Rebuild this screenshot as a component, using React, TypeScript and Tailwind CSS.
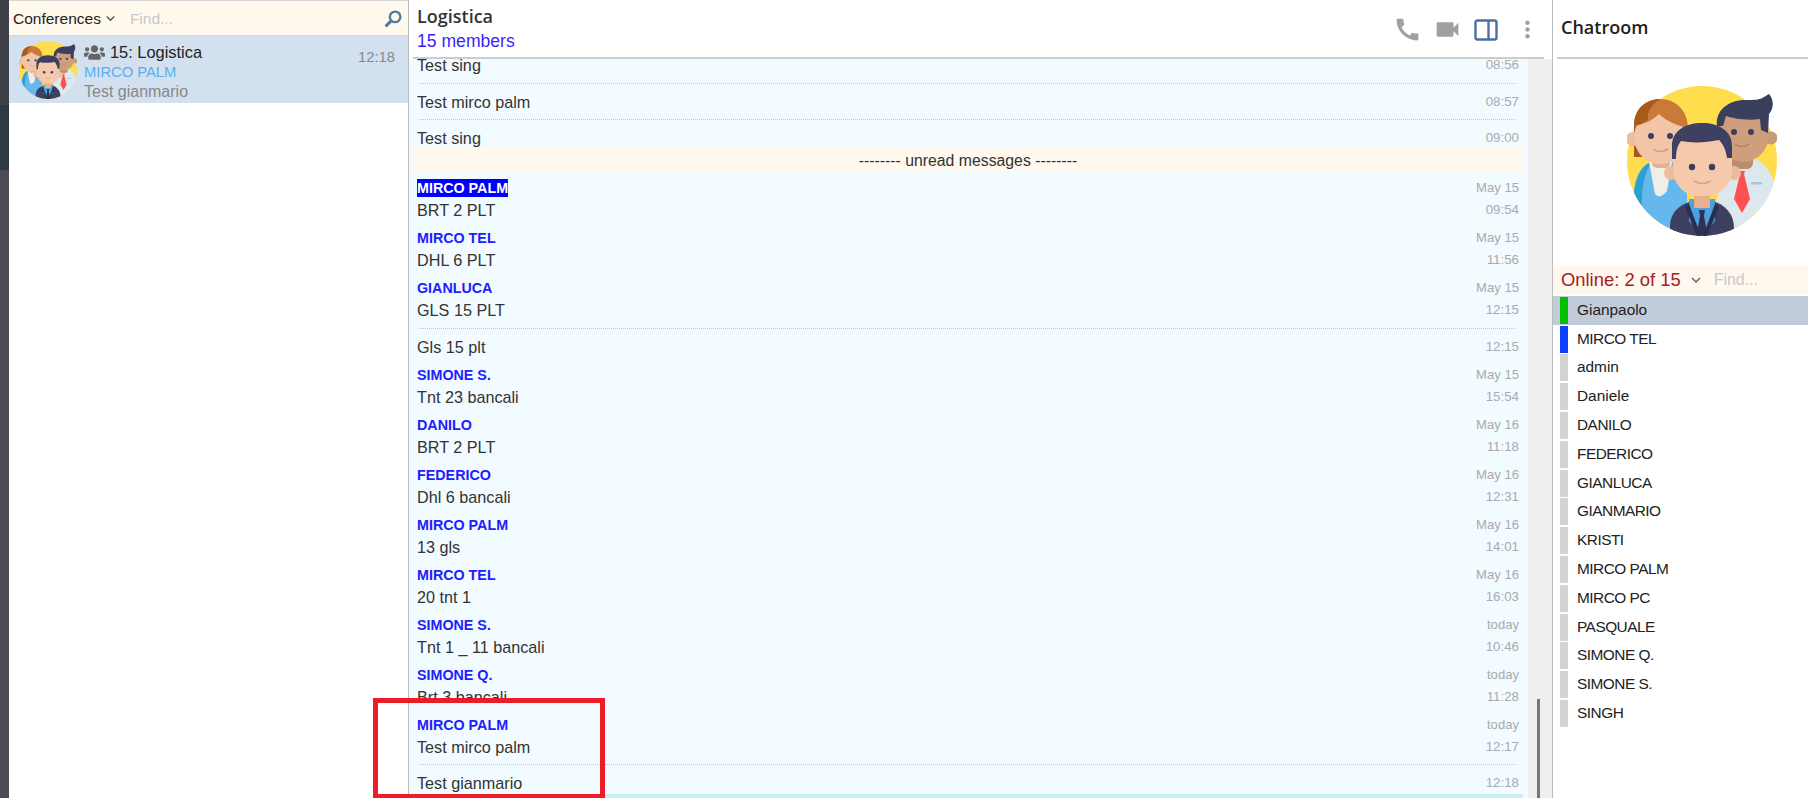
import { FaUsers } from 'react-icons/fa'
import { MdCall, MdKeyboardArrowDown, MdMoreVert, MdVideocam } from 'react-icons/md'

type Msg = {
  name?: string
  date?: string
  text: string
  time: string
  sep?: boolean
  tight?: boolean
  highlight?: boolean
}

const topMessages: Msg[] = [
  { text: 'Test sing', time: '08:56' },
  { text: 'Test mirco palm', time: '08:57', sep: true },
  { text: 'Test sing', time: '09:00', sep: true, tight: true },
]

const messages: Msg[] = [
  { name: 'MIRCO PALM', date: 'May 15', text: 'BRT 2 PLT', time: '09:54', highlight: true },
  { name: 'MIRCO TEL', date: 'May 15', text: 'DHL 6 PLT', time: '11:56' },
  { name: 'GIANLUCA', date: 'May 15', text: 'GLS 15 PLT', time: '12:15' },
  { text: 'Gls 15 plt', time: '12:15', sep: true },
  { name: 'SIMONE S.', date: 'May 15', text: 'Tnt 23 bancali', time: '15:54' },
  { name: 'DANILO', date: 'May 16', text: 'BRT 2 PLT', time: '11:18' },
  { name: 'FEDERICO', date: 'May 16', text: 'Dhl 6 bancali', time: '12:31' },
  { name: 'MIRCO PALM', date: 'May 16', text: '13 gls', time: '14:01' },
  { name: 'MIRCO TEL', date: 'May 16', text: '20 tnt 1', time: '16:03' },
  { name: 'SIMONE S.', date: 'today', text: 'Tnt 1 _ 11 bancali', time: '10:46' },
  { name: 'SIMONE Q.', date: 'today', text: 'Brt 3 bancali', time: '11:28' },
  { name: 'MIRCO PALM', date: 'today', text: 'Test mirco palm', time: '12:17' },
  { text: 'Test gianmario', time: '12:18', sep: true, tight: true },
]

const members = [
  { name: 'Gianpaolo', status: 'green' },
  { name: 'MIRCO TEL', status: 'blue' },
  { name: 'admin' },
  { name: 'Daniele' },
  { name: 'DANILO' },
  { name: 'FEDERICO' },
  { name: 'GIANLUCA' },
  { name: 'GIANMARIO' },
  { name: 'KRISTI' },
  { name: 'MIRCO PALM' },
  { name: 'MIRCO PC' },
  { name: 'PASQUALE' },
  { name: 'SIMONE Q.' },
  { name: 'SIMONE S.' },
  { name: 'SINGH' },
]

function GroupAvatar({ size, clipId }: { size: number; clipId: string }) {
  return (
    <svg width={size} height={size} viewBox="0 0 150 150" className="shrink-0">
      <defs>
        <clipPath id={clipId}>
          <circle cx="75" cy="75" r="75" />
        </clipPath>
      </defs>
      <circle cx="75" cy="75" r="75" fill="#ffdd4d" />

      {/* man on the right */}
      <g clipPath={`url(#${clipId})`}>
        <path d="M95 75 L127 72 C142 80 150 95 150 115 L150 150 L85 150Z" fill="#dce8ee" />
        <rect x="124" y="96" width="11" height="2.5" fill="#a8c8d8" />
      </g>
      <circle cx="144" cy="52" r="6.5" fill="#c99a78" />
      <rect x="104" y="66" width="22" height="17" rx="6" fill="#bd8c6c" />
      <ellipse cx="116" cy="49" rx="26" ry="27" fill="#cf9e7c" />
      <path
        d="M90 40 C88 24 102 14 118 14 C127 14 133 14 137 11 L142 8 C147 14 147 22 142 28 L141 47 L134 44 L133 33 C120 35 104 32 99 30 L96 40Z"
        fill="#3a3f5e"
      />
      <circle cx="107" cy="46" r="3" fill="#3a3f5e" />
      <circle cx="124" cy="46" r="3" fill="#3a3f5e" />
      <path d="M108 58 Q115 63 122 58" stroke="#b0805e" strokeWidth="1.5" fill="none" />
      <path d="M112 85 L118 85 L117 88 L123 113 L115 127 L107 113 L113 88Z" fill="#ff5050" />

      {/* woman on the left */}
      <g clipPath={`url(#${clipId})`}>
        <path d="M7 110 C7 90 15 78 25 76 L60 76 L60 150 L0 150Z" fill="#66b8ec" />
        <path d="M7 122 C5 95 15 78 25 76 C18 85 14 100 15 128Z" fill="#2aa0d0" />
        <path d="M22 76 L45 76 L40 105 Q33 114 28 108Z" fill="#efefe8" />
      </g>
      <rect x="7" y="36" width="13" height="35" fill="#a85a1a" />
      <circle cx="6" cy="53" r="7" fill="#f0bca0" />
      <rect x="25" y="68" width="18" height="14" rx="5" fill="#e6b090" />
      <ellipse cx="33" cy="51" rx="26" ry="27" fill="#f3c5a8" />
      <path d="M7 40 C7 22 20 13 33 13 C50 13 61 26 61 42 C50 40 38 34 32 28 C26 34 16 39 7 40Z" fill="#c97a3a" />
      <path d="M7 40 C7 22 20 13 33 13 C22 20 20 28 21 34 C16 37 12 39 7 40Z" fill="#a85a1a" />
      <circle cx="24" cy="50" r="3" fill="#3a3f5e" />
      <circle cx="43" cy="50" r="3" fill="#3a3f5e" />
      <path d="M26 63 Q33 68 41 63" stroke="#d89c7c" strokeWidth="1.5" fill="none" />

      {/* man in front */}
      <g clipPath={`url(#${clipId})`}>
        <path d="M43 150 L43 140 C43 125 55 118 65 115 L85 115 C98 118 107 128 107 142 L107 150Z" fill="#3d4060" />
        <path d="M62 113 L88 113 L88 135 L75 150 L62 135Z" fill="#4aa0e0" />
        <path d="M72 124 L78 124 L77 130 L80 146 L75 150 L70 146 L73 130Z" fill="#2f3350" />
        <path d="M62 118 L58 121 L70 150 L74 150Z" fill="#2a2e50" />
        <path d="M88 118 L92 121 L80 150 L76 150Z" fill="#2a2e50" />
      </g>
      <rect x="67" y="104" width="16" height="18" fill="#e8b090" />
      <circle cx="44" cy="87" r="7" fill="#eebb9c" />
      <circle cx="107" cy="87" r="7" fill="#eebb9c" />
      <rect x="46" y="44" width="59" height="66" rx="26" fill="#f5c9ab" />
      <path
        d="M45 73 L45 60 C45 45 58 37 75 37 C92 37 105 45 105 60 L105 72 L100 72 C99 64 96 58 92 54 C78 57 64 57 54 55 C50 60 49 66 49 73Z"
        fill="#3d4060"
      />
      <circle cx="65" cy="81" r="3.2" fill="#3a3f5e" />
      <circle cx="85" cy="81" r="3.2" fill="#3a3f5e" />
      <path d="M67 95 Q75 100 84 95" stroke="#dea080" strokeWidth="1.5" fill="none" />
    </svg>
  )
}

function MessageRow({ msg }: { msg: Msg }) {
  if (!msg.name) {
    const spacing = !msg.sep ? '-mt-[4px] pb-px' : msg.tight ? 'mt-[6px] pb-px' : 'mt-[7px] pb-px'

    return (
      <div className={spacing}>
        {msg.sep ? <div className="ml-[10px] mr-[12px] mb-[8px] border-t border-dotted border-[#c4c4c4]" /> : null}
        <div className="flex h-[20px] items-center justify-between pl-[8px] pr-[9px]">
          <span className="text-[16.2px] text-[#333]">{msg.text}</span>
          <span className="text-[13.3px] text-[#aaa]">{msg.time}</span>
        </div>
      </div>
    )
  }

  return (
    <div className="pb-px pl-[8px] pr-[9px] pt-[8px]">
      <div className="flex h-[18px] items-center justify-between">
        <span
          className={`text-[14.3px] font-bold leading-[18px] ${
            msg.highlight ? 'bg-[#0000ff] text-white' : 'text-[#2020ff]'
          }`}
        >
          {msg.name}
        </span>
        <span className="text-[13.1px] text-[#aaa]">{msg.date}</span>
      </div>
      <div className="mt-[3px] flex h-[20px] items-center justify-between">
        <span className="text-[16.2px] text-[#333]">{msg.text}</span>
        <span className="text-[13.3px] text-[#aaa]">{msg.time}</span>
      </div>
    </div>
  )
}

export default function App() {
  return (
    <div className="relative flex h-[798px] w-[1808px] overflow-hidden bg-white font-['Liberation_Sans',Arial,sans-serif]">
      <div className="flex w-[9px] shrink-0 flex-col">
        <div className="h-[105px] bg-[#3f4149]" />
        <div className="h-[65px] bg-[#2f3845]" />
        <div className="flex-1 bg-[#4a4b53]" />
      </div>

      {/* conference list */}
      <div className="w-[400px] shrink-0 border-r border-[#bbb]">
        <div className="flex h-[36px] items-center border-y border-[#d8d8d8] bg-[#fff9ee] pl-[4px] pr-[6px] pt-px">
          <span className="text-[15.5px] text-[#222]">Conferences</span>
          <MdKeyboardArrowDown className="ml-[1px] text-[#555]" size={17} />
          <span className="ml-[11px] text-[15.5px] text-[#c8c8c8]">Find...</span>
          <svg width="18" height="18" viewBox="0 0 17 17" className="ml-auto" fill="none" stroke="#4a7ba5">
            <circle cx="10.5" cy="6.5" r="5" strokeWidth="2.2" />
            <path d="M6.5 10.5 L1.5 15.5" strokeWidth="2.8" />
          </svg>
        </div>
        <div className="flex h-[67px] bg-[#d3e0f0] pl-[10px] pr-[13px]">
          <div className="mt-[5px] h-[58px]">
            <GroupAvatar size={58} clipId="avatar-small" />
          </div>
          <div className="ml-[7px] flex-1 pt-[7px] leading-[19px]">
            <div className="flex h-[19px] items-center">
              <FaUsers className="text-[#666]" size={21} />
              <span className="ml-[5px] text-[16.4px] text-[#222]">15: Logistica</span>
            </div>
            <div className="mt-px text-[14.75px] text-[#55b0f0]">MIRCO PALM</div>
            <div className="text-[16px] text-[#888]">Test gianmario</div>
          </div>
          <span className="pt-[10px] text-[14.8px] text-[#888]">12:18</span>
        </div>
      </div>

      {/* chat */}
      <div className="flex w-[1143px] shrink-0 flex-col">
        <div className="ml-[4px] mr-[8px] flex h-[59px] shrink-0 items-start border-b-2 border-[#ccc] pl-[4px]">
          <div>
            <div className="pt-[3px] font-['Open_Sans',sans-serif] text-[18px] font-semibold leading-[26px] text-[#333]">
              Logistica
            </div>
            <div className="mt-px text-[17.6px] leading-[22px] text-[#3a1fff]">15 members</div>
          </div>
          <div className="ml-auto mr-[3px] flex items-center pt-[15px]">
            <MdCall className="text-[#a0a0a0]" size={29} />
            <MdVideocam className="ml-[11px] text-[#a0a0a0]" size={29} />
            <svg width="24" height="22" viewBox="0 0 24 22" className="ml-[12px]" fill="none" stroke="#4a6fa5" strokeWidth="2.4">
              <rect x="1.5" y="1.5" width="21" height="19" rx="2" />
              <path d="M14.5 2 L14.5 20" />
            </svg>
            <MdMoreVert className="ml-[16px] text-[#a0a0a0]" size={27} />
          </div>
        </div>

        <div className="flex min-h-0 flex-1">
          <div className="flex w-[1119px] shrink-0 flex-col overflow-hidden bg-[#f2fbff]">
            {topMessages.map((msg, i) => (
              <MessageRow key={i} msg={msg} />
            ))}
            <div className="-mt-px ml-[4px] mr-[5px] flex h-[23px] shrink-0 items-center justify-center bg-[#fff9ef] pt-[2px] text-[15.8px] text-[#333]">
              -------- unread messages --------
            </div>
            {messages.map((msg, i) => (
              <MessageRow key={i} msg={msg} />
            ))}
            <div className="ml-[4px] mr-[5px] h-[4px] shrink-0 bg-[#c8f0f0]" />
          </div>
          <div className="flex w-[24px] shrink-0 flex-col justify-end bg-[#efefef] pl-[9px]">
            <div className="h-[99px] w-[3px] bg-[#777]" />
          </div>
        </div>
      </div>

      {/* chatroom members */}
      <div className="w-[256px] shrink-0 border-l border-[#bbb]">
        <div className="ml-[4px] flex h-[59px] items-start border-b-2 border-[#ccc] pl-[4px] pt-[14px] font-['Open_Sans',sans-serif] text-[18px] font-semibold leading-[26px] text-[#222]">
          Chatroom
        </div>
        <div className="pl-[74px] pt-[27px]">
          <GroupAvatar size={150} clipId="avatar-large" />
        </div>
        <div className="mt-[29px] flex h-[30px] items-center bg-[#fff8ee] pl-[8px]">
          <span className="text-[18.4px] text-[#a52020]">Online: 2 of 15</span>
          <MdKeyboardArrowDown className="ml-[6px] text-[#666]" size={18} />
          <span className="ml-[9px] text-[16px] text-[#c8c8c8]">Find...</span>
        </div>
        <div className="mt-px">
          {members.map((member, i) => (
            <div
              key={member.name}
              className={`flex h-[28.8px] items-center pl-[7px] ${i === 0 ? 'bg-[#c0ccda]' : ''}`}
            >
              <div
                className={`h-[27px] w-[8px] ${
                  member.status === 'green'
                    ? 'bg-[#00c000]'
                    : member.status === 'blue'
                      ? 'bg-[#0f40ff]'
                      : 'bg-[#d3d3d3]'
                }`}
              />
              <span
                className={`mb-[2px] ml-[9px] text-[15.4px] text-[#222] ${
                  member.name === member.name.toUpperCase() ? 'tracking-[-0.5px]' : ''
                }`}
              >
                {member.name}
              </span>
            </div>
          ))}
        </div>
      </div>

      {/* annotation drawn over the screenshot */}
      <div className="absolute left-[373px] top-[698px] h-[100px] w-[232px] border-[5px] border-b-4 border-[#ee1c25]" />
    </div>
  )
}
